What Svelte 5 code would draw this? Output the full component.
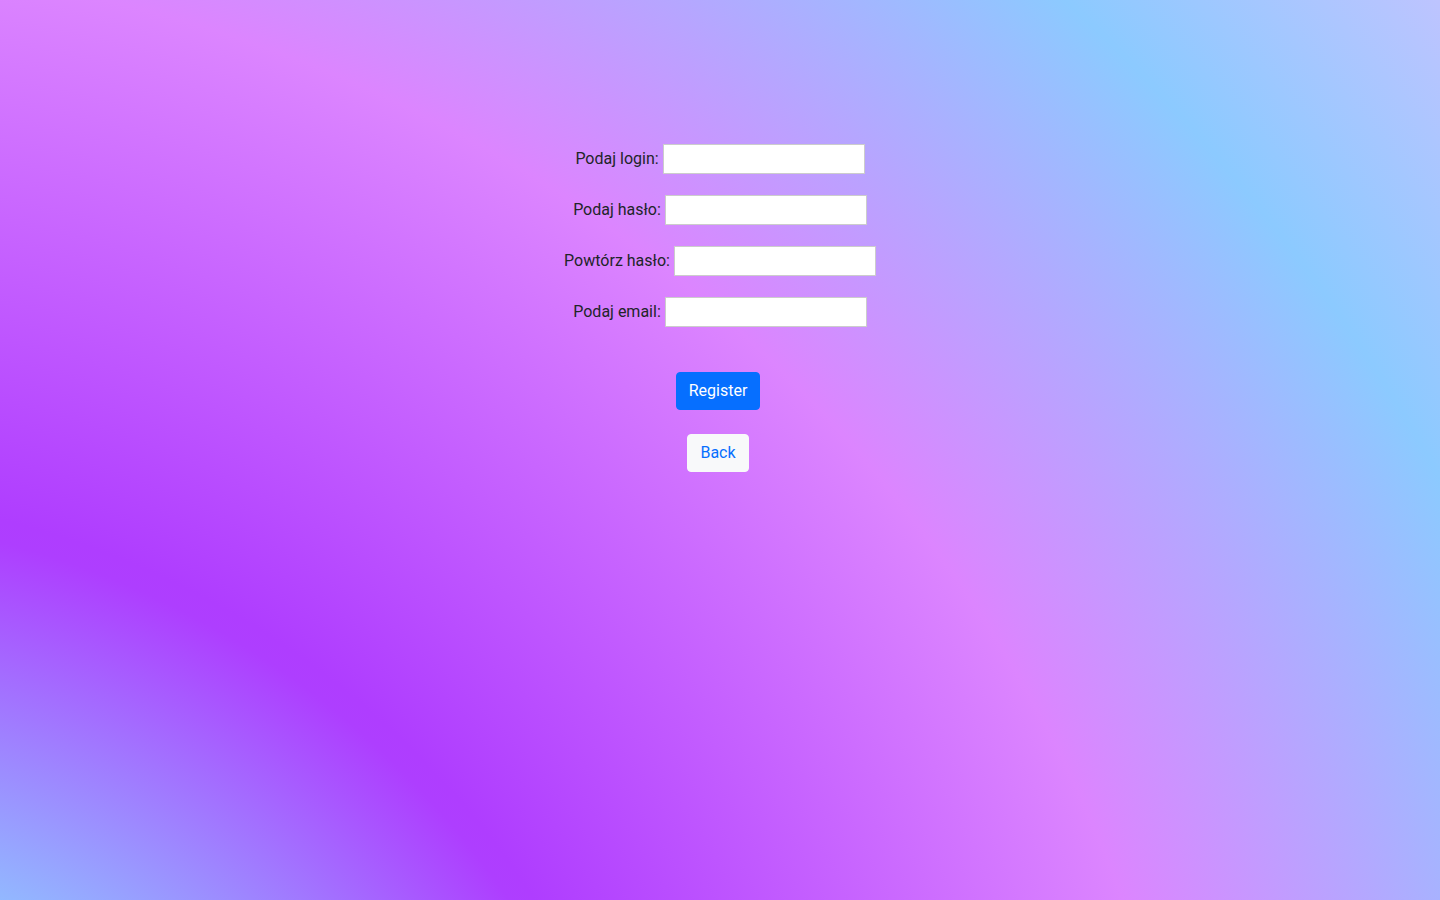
<script>
  const fields = [
    { id: 'login', label: 'Podaj login:', type: 'text' },
    { id: 'password', label: 'Podaj hasło:', type: 'password' },
    { id: 'repeat', label: 'Powtórz hasło:', type: 'password' },
    { id: 'email', label: 'Podaj email:', type: 'email' }
  ];
</script>

<main>
  <form onsubmit={(event) => event.preventDefault()}>
    {#each fields as field (field.id)}
      <div class="field">
        <label for={field.id}>{field.label}</label>
        <input id={field.id} name={field.id} type={field.type} />
      </div>
    {/each}
    <div class="actions">
      <button class="btn primary" type="submit">Register</button>
      <a class="btn light" href="#back">Back</a>
    </div>
  </form>
</main>

<style>
  :global(body) {
    margin: 0;
  }

  main {
    box-sizing: border-box;
    min-height: 100vh;
    padding: 144px 16px 48px;
    background: radial-gradient(
      circle 150vw at -15vw 96.5vw,
      #91beff 24%,
      #ae3eff 40.5%,
      #af3dff 41.5%,
      #dc85ff 66%,
      #8ccaff 87.5%,
      #bdc4ff 100%
    );
    color: #212529;
    font-family: Roboto, sans-serif;
    font-size: 16px;
    line-height: 24px;
  }

  form {
    display: flex;
    flex-direction: column;
    gap: 21px;
  }

  .field {
    display: flex;
    align-items: center;
    justify-content: center;
    gap: 4px;
  }

  input {
    box-sizing: border-box;
    width: 202px;
    height: 30px;
    padding: 2px 4px;
    border: 1px solid #ccc;
    border-radius: 0;
    background: #fff;
    color: inherit;
    font: inherit;
  }

  .actions {
    display: flex;
    flex-direction: column;
    align-items: center;
    gap: 24px;
    padding: 24px 4px 0 0;
  }

  .btn {
    padding: 6px 12px;
    border: 1px solid transparent;
    border-radius: 4px;
    font: inherit;
    text-decoration: none;
    cursor: pointer;
  }

  .primary {
    border-color: #066fff;
    background: #066fff;
    color: #fff;
  }

  .light {
    border-color: #f8f9fa;
    background: #f8f9fa;
    color: #066fff;
  }
</style>
